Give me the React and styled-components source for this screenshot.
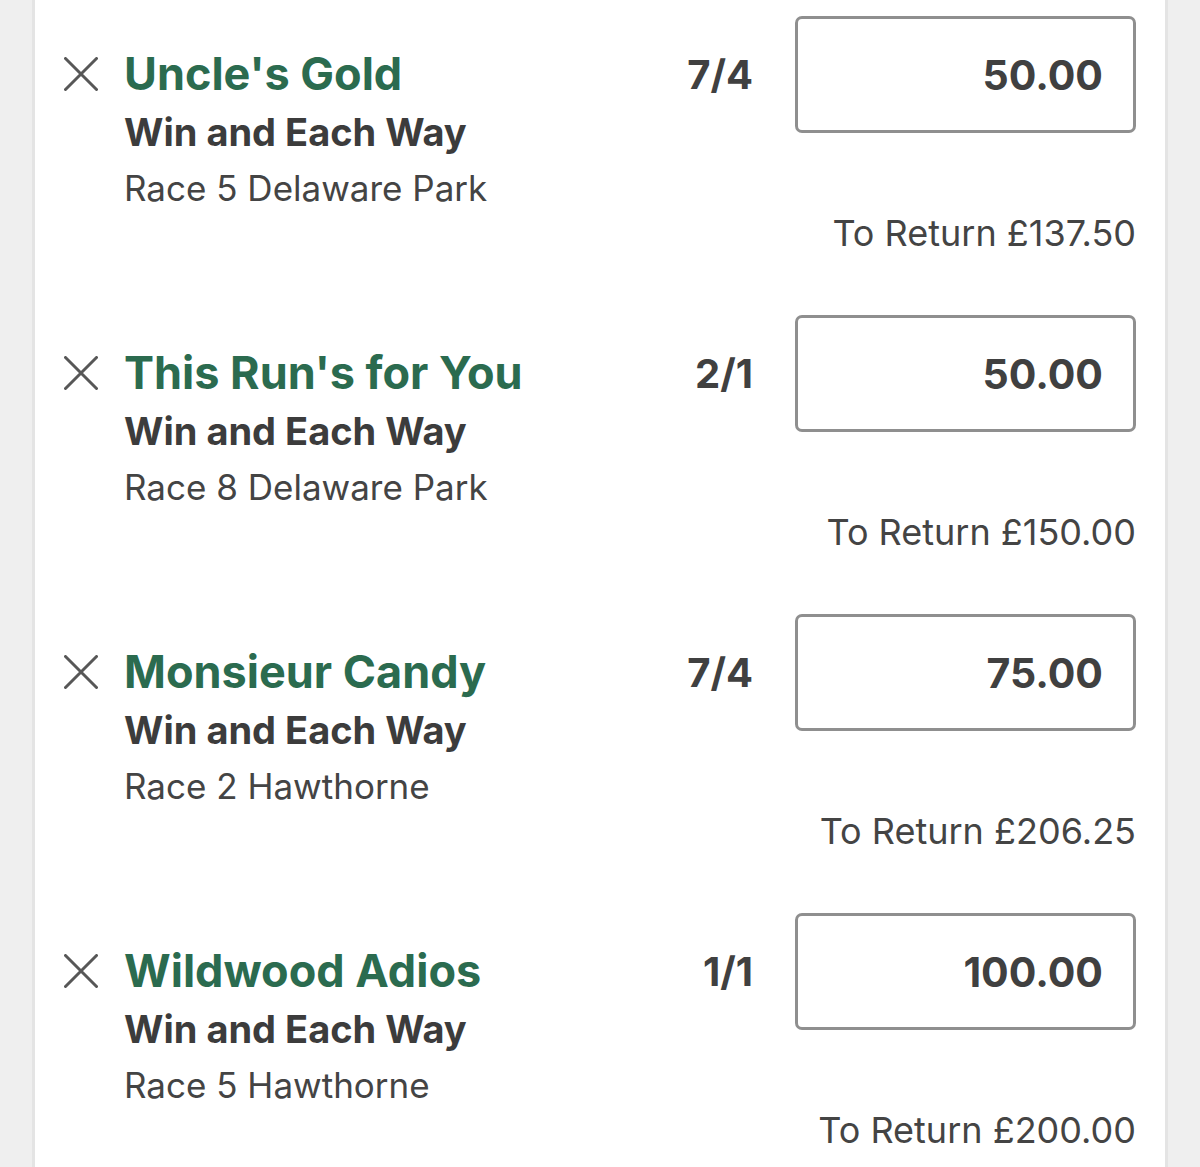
import styled, { createGlobalStyle } from 'styled-components';

const GlobalStyle = createGlobalStyle`
  body {
    margin: 0;
    background: #efefef;
    font-family: 'Inter', 'Liberation Sans', sans-serif;
    -webkit-font-smoothing: antialiased;
  }
`;

const Panel = styled.div`
  margin: 0 32px;
  min-height: 100vh;
  background: #ffffff;
  border-left: 3px solid #e4e4e4;
  border-right: 3px solid #e4e4e4;
`;

const BetRow = styled.div`
  display: flex;
  align-items: flex-start;
  padding: 16px 29px 46px 29px;
`;

const Selection = styled.div`
  flex: 1;
  display: grid;
  grid-template-columns: 34px 1fr;
  column-gap: 26px;
  padding-top: 30px;
`;

const RemoveButton = styled.button`
  grid-column: 1;
  align-self: center;
  width: 34px;
  height: 34px;
  padding: 0;
  border: none;
  background: none;
  color: #575757;
  cursor: pointer;

  svg {
    display: block;
  }
`;

const Name = styled.div`
  grid-column: 2;
  font-size: 45px;
  line-height: 56px;
  font-weight: 700;
  color: #2b6b4f;
  white-space: nowrap;
`;

const BetType = styled.div`
  grid-column: 2;
  font-size: 38px;
  line-height: 60px;
  font-weight: 700;
  color: #3c3c3c;
`;

const Race = styled.div`
  grid-column: 2;
  font-size: 35px;
  line-height: 52px;
  font-weight: 400;
  color: #444444;
`;

const PriceColumn = styled.div`
  display: flex;
  flex-direction: column;
  align-items: flex-end;
`;

const PriceLine = styled.div`
  display: flex;
  align-items: center;
  gap: 42px;
`;

const Odds = styled.div`
  font-size: 40px;
  font-weight: 700;
  color: #404040;
`;

const StakeBox = styled.div`
  box-sizing: border-box;
  width: 341px;
  height: 117px;
  display: flex;
  align-items: center;
  justify-content: flex-end;
  padding-right: 30px;
  border: 3px solid #8f8f8f;
  border-radius: 7px;
  font-size: 41px;
  font-weight: 700;
  color: #404040;
`;

const ToReturn = styled.div`
  margin-top: 80px;
  font-size: 36px;
  line-height: 40px;
  color: #444444;
`;

const bets = [
  { name: "Uncle's Gold", race: 'Race 5 Delaware Park', odds: '7/4', stake: '50.00', ret: '137.50' },
  { name: "This Run's for You", race: 'Race 8 Delaware Park', odds: '2/1', stake: '50.00', ret: '150.00' },
  { name: 'Monsieur Candy', race: 'Race 2 Hawthorne', odds: '7/4', stake: '75.00', ret: '206.25' },
  { name: 'Wildwood Adios', race: 'Race 5 Hawthorne', odds: '1/1', stake: '100.00', ret: '200.00' },
];

function CloseIcon() {
  return (
    <svg width="34" height="34" viewBox="0 0 34 34" fill="none">
      <path d="M1.5 1.5 L32.5 32.5 M32.5 1.5 L1.5 32.5" stroke="currentColor" strokeWidth="3" strokeLinecap="round" />
    </svg>
  );
}

function Bet({ bet }) {
  return (
    <BetRow>
      <Selection>
        <RemoveButton aria-label="Remove selection">
          <CloseIcon />
        </RemoveButton>
        <Name>{bet.name}</Name>
        <BetType>Win and Each Way</BetType>
        <Race>{bet.race}</Race>
      </Selection>
      <PriceColumn>
        <PriceLine>
          <Odds>{bet.odds}</Odds>
          <StakeBox>{bet.stake}</StakeBox>
        </PriceLine>
        <ToReturn>To Return £{bet.ret}</ToReturn>
      </PriceColumn>
    </BetRow>
  );
}

export default function App() {
  return (
    <>
      <GlobalStyle />
      <Panel>
        {bets.map((bet) => (
          <Bet key={bet.name} bet={bet} />
        ))}
      </Panel>
    </>
  );
}
